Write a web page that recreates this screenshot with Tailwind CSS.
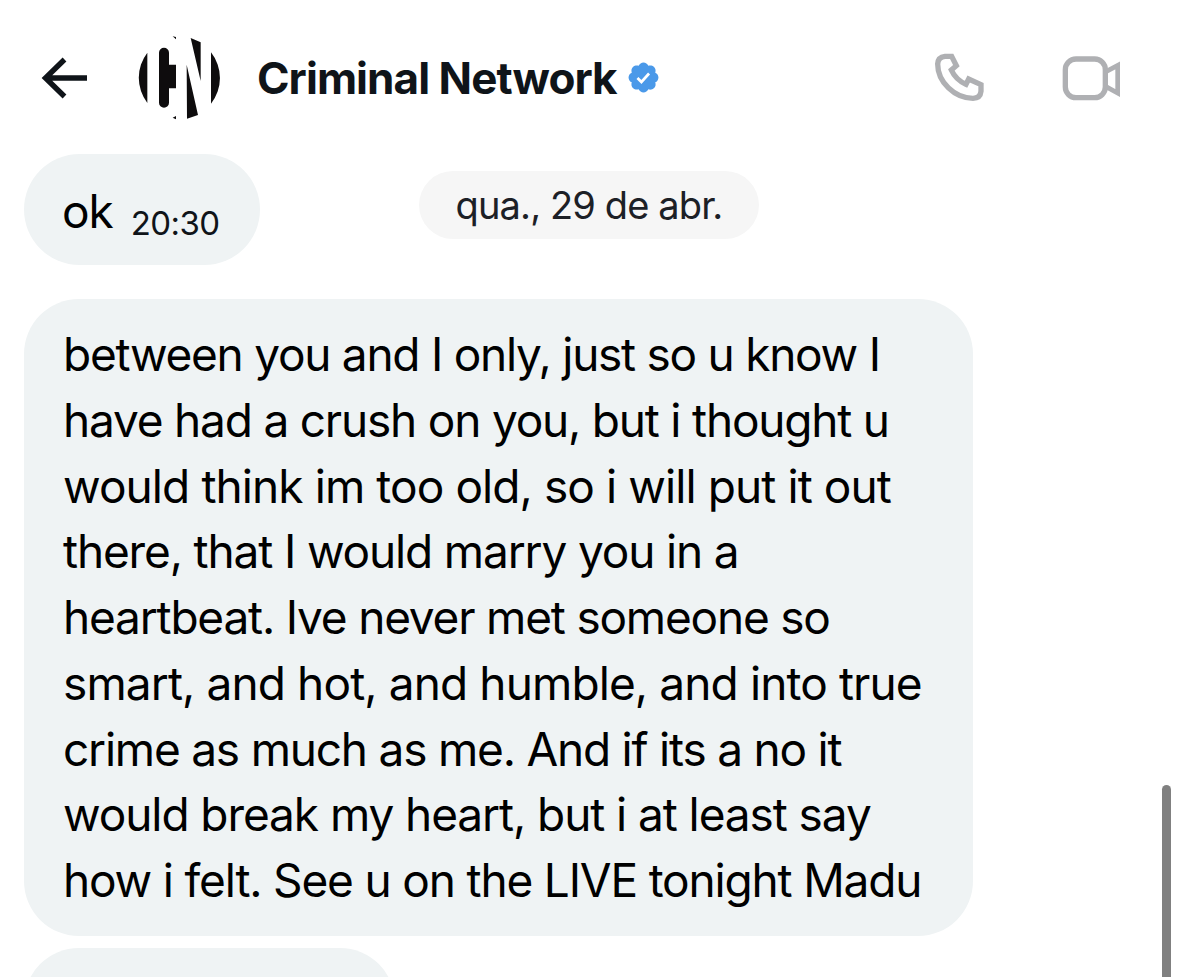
<!DOCTYPE html>
<html lang="pt">

<head>
    <meta charset="UTF-8">
    <meta name="viewport" content="width=device-width, initial-scale=1.0">
    <title>Criminal Network</title>
    <script src="https://cdn.jsdelivr.net/npm/@tailwindcss/browser@4"></script>
</head>

<body class="bg-white">
    <div class="relative w-[1179px] h-[977px] overflow-hidden font-['Inter',sans-serif] text-black">

        <header class="flex items-center h-[155px] pl-[41px] pr-[57px]">
            <svg class="w-[47px] h-[42px]" viewBox="0 0 47 42" fill="none" stroke="#0f1419" stroke-width="5.4">
                <path d="M23.5 2.5 4.5 21l19 18.500M4 21h42" />
            </svg>
            <svg class="w-[90px] h-[90px] ml-[47px]" viewBox="345 38 270 270" fill="#0e0c0d">
                <path d="M382 97v151a124 124 0 0 1 0-151zM573 96a124 124 0 0 1 0 154z" />
                <path d="M417 97a15 15 0 0 1 30 0v36h21v71h-21v43a15 15 0 0 1-30 0z" />
                <path d="M512 53l30 13v116zM500 133l34 151-33 11zM458 48l10 2v7zM458 292l10-5v10z" />
            </svg>
            <h1 class="ml-[32px] font-bold text-[44px] leading-none tracking-[-0.94px] text-[#0f1419] whitespace-nowrap"><span>Criminal Network</span></h1>
            <svg class="w-[35px] h-[35px] ml-[9px]" viewBox="0 0 22 22" fill="#4a99e9">
                <path d="M20.396 11c-.018-.646-.215-1.275-.57-1.816-.354-.54-.852-.972-1.438-1.246.223-.607.27-1.264.14-1.897-.131-.634-.437-1.218-.882-1.687-.47-.445-1.053-.75-1.687-.882-.633-.13-1.290-.083-1.897.14-.273-.587-.704-1.086-1.245-1.440S11.647 1.620 11 1.604c-.646.017-1.273.213-1.813.568s-.969.854-1.240 1.440c-.608-.223-1.267-.272-1.902-.14-.635.130-1.220.436-1.690.882-.445.470-.749 1.055-.878 1.688-.130.633-.080 1.290.144 1.896-.587.274-1.087.705-1.443 1.245-.356.540-.555 1.170-.574 1.817.020.647.218 1.276.574 1.817.356.540.856.972 1.443 1.245-.224.606-.274 1.263-.144 1.896.130.634.433 1.218.877 1.688.470.443 1.054.747 1.687.878.633.132 1.290.084 1.897-.136.274.586.705 1.084 1.246 1.439.540.354 1.170.551 1.816.569.647-.016 1.276-.213 1.817-.567s.972-.854 1.245-1.440c.604.239 1.266.296 1.903.164.636-.132 1.220-.447 1.680-.907.460-.460.776-1.044.908-1.681s.075-1.299-.165-1.903c.586-.274 1.084-.705 1.439-1.246.354-.540.551-1.170.569-1.816z" />
                <path d="M7.200 11.300l2.500 2.500 4.800-5.300" fill="none" stroke="#fff" stroke-width="1.700" />
            </svg>
            <svg class="w-[54px] h-[54px] ml-auto" viewBox="0 0 162 162" fill="none" stroke="#afb0b3" stroke-width="16">
                <path d="M36 16H56L70 44 55 57Q68 86 99 100L107 84 144 101V121Q142 142 120 142C65 142 14 93 14 39Q15 18 36 16z" />
            </svg>
            <svg class="w-[60px] h-[46px] ml-[75px]" viewBox="0 0 180 138" fill="none" stroke="#afb0b3" stroke-width="16">
                <rect x="10" y="12" width="120" height="116" rx="32" />
                <path d="M132 50l35-19v83l-35-19" stroke-width="14" />
            </svg>
        </header>

        <main class="flex flex-col items-start pl-6 -mt-px">
            <div class="flex items-start">
                <div class="flex w-[236px] h-[111px] rounded-full bg-[#eff3f4] pl-[38px]">
                    <span class="text-[46px] leading-[114px] tracking-[-1px]">ok</span>
                    <span class="ml-[18px] text-[33px] leading-[138px] tracking-[-0.6px] text-[#0f1419]">20:30</span>
                </div>
                <!-- date separator -->
                <div class="flex justify-center w-[340px] h-[68px] mt-[17px] ml-[159px] rounded-full bg-[#f6f6f6] text-[#1c2026] text-[38px] leading-[68px] tracking-[-0.87px] whitespace-nowrap">
                    <span>qua., 29 de abr.</span>
                </div>
            </div>

            <div class="w-[949px] h-[637px] mt-[34px] pt-[23px] pl-[39px] rounded-[55px] bg-[#eff3f4] text-[46px] leading-[65.75px] whitespace-nowrap">
                <p class="tracking-[-1.26px]"><span>between you and I only, just so u know I</span></p>
                <p class="tracking-[-1.2px]"><span>have had a crush on you, but i thought u</span></p>
                <p class="tracking-[-0.91px]"><span>would think im too old, so i will put it out</span></p>
                <p class="tracking-[-1.15px]"><span>there, that I would marry you in a</span></p>
                <p class="tracking-[-1.2px]"><span>heartbeat. Ive never met someone so</span></p>
                <p class="tracking-[-0.88px]"><span>smart, and hot, and humble, and into true</span></p>
                <p class="tracking-[-1.21px]"><span>crime as much as me. And if its a no it</span></p>
                <p class="tracking-[-1.08px]"><span>would break my heart, but i at least say</span></p>
                <p class="tracking-[-1.17px]"><span>how i felt. See u on the LIVE tonight Madu</span></p>
            </div>

            <div class="w-[371px] h-[111px] mt-3 rounded-[55px] bg-[#eff3f4]"></div>
        </main>

        <!-- scrollbar thumb -->
        <div class="absolute left-[1162px] top-[785px] w-[9px] h-[220px] rounded-full bg-[#808080]"></div>
    </div>
</body>

</html>
